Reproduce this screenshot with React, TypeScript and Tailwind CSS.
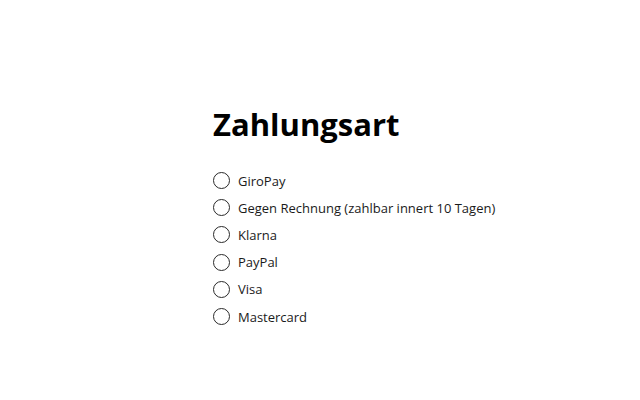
import React from "react";

const options = [
  "GiroPay",
  "Gegen Rechnung (zahlbar innert 10 Tagen)",
  "Klarna",
  "PayPal",
  "Visa",
  "Mastercard",
];

export default function App() {
  return (
    <div className="w-[640px] h-[400px] bg-white pl-[213px] pt-[104px]" style={{ fontFamily: '"Open Sans", "Noto Sans", sans-serif' }}>
      <h1 className="text-[31px] font-bold leading-[40px] text-black">Zahlungsart</h1>
      <div className="mt-[23px] flex flex-col">
        {options.map((o) => (
          <label key={o} className="flex items-center gap-[8px] h-[27.2px]">
            <span className="w-[17px] h-[17px] rounded-full border-[1.6px] border-[#2a2a2a] bg-white shrink-0" />
            <span className="text-[13px] text-[#1a1a1a] leading-[16px]">{o}</span>
          </label>
        ))}
      </div>
    </div>
  );
}
